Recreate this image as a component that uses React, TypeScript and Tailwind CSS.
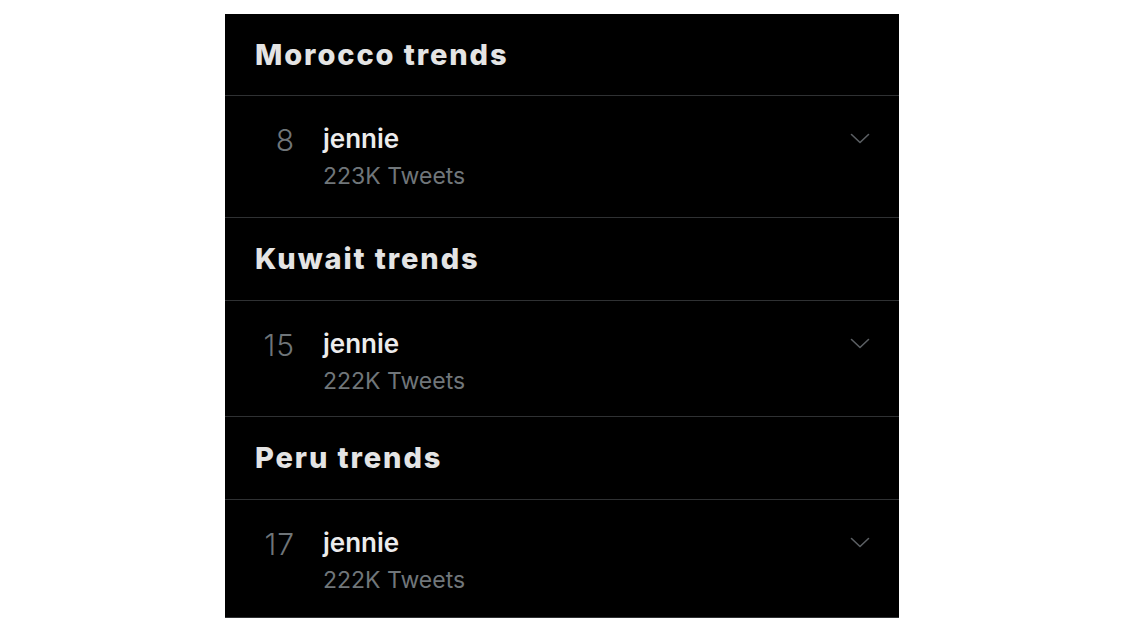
const SECTIONS = [
  { country: 'Morocco', rank: 8, name: 'jennie', count: '223K', headerH: 'h-[82px]', rowH: 'h-[122px]' },
  { country: 'Kuwait', rank: 15, name: 'jennie', count: '222K', headerH: 'h-[83px]', rowH: 'h-[116px]' },
  { country: 'Peru', rank: 17, name: 'jennie', count: '222K', headerH: 'h-[83px]', rowH: 'h-[118px]' },
];

function Chevron() {
  return (
    <svg width="20" height="12" viewBox="0 0 20 12" fill="none" className="text-[#5b5f63]">
      <path d="M1.5 1.5 L10 9.5 L18.5 1.5" stroke="currentColor" strokeWidth="1.6" strokeLinecap="round" strokeLinejoin="round" />
    </svg>
  );
}

export default function App() {
  return (
    <div className="w-[1124px] h-[632px] bg-white flex justify-center pt-[14px] overflow-hidden">
      <div className="w-[674px] h-[604px] bg-black flex flex-col overflow-hidden" style={{ fontFamily: 'Inter, "Noto Sans", sans-serif' }}>
        {SECTIONS.map((s) => (
          <div key={s.country} className="flex flex-col">
            <div className={`${s.headerH} flex items-center px-[30px] border-b border-[#2f3133]`}>
              <h2 className="text-[29px] font-extrabold text-[#e4e4e4] tracking-[1.9px]">{s.country} trends</h2>
            </div>
            <div className={`${s.rowH} flex border-b border-[#2f3133]`}>
              <div className="w-[70px] text-right pt-[29px] text-[30px] font-light text-[#6f7579] leading-none tracking-[1px]">
                {s.rank}
              </div>
              <div className="ml-[28px] flex-1 pt-[28px]">
                <div className="text-[26px] font-semibold text-[#ececec] leading-[30px]">{s.name}</div>
                <div className="text-[23px] text-[#70767a] leading-[30px] mt-[7px]">{s.count} Tweets</div>
              </div>
              <div className="pt-[37px] pr-[29px]">
                <Chevron />
              </div>
            </div>
          </div>
        ))}
      </div>
    </div>
  );
}
